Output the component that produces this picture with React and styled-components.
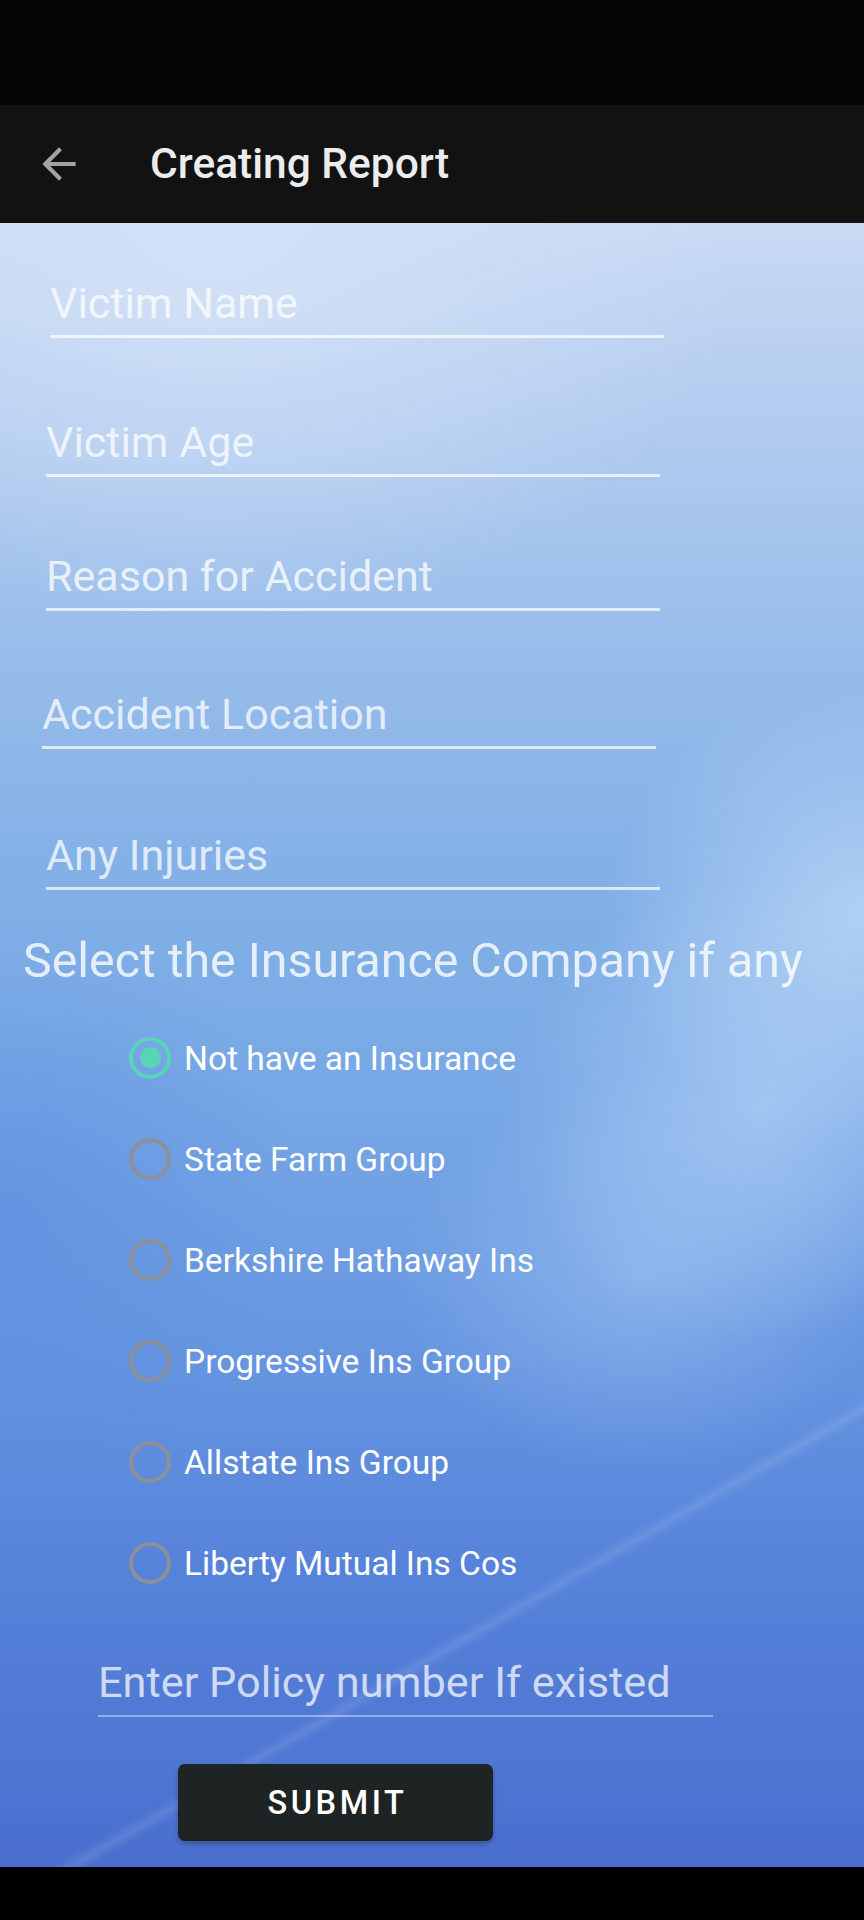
import React from "react";
import styled, { createGlobalStyle } from "styled-components";

const GlobalStyle = createGlobalStyle`
  html, body {
    margin: 0;
    padding: 0;
    background: #000;
  }
  body {
    font-family: Roboto, "Noto Sans", "Liberation Sans", sans-serif;
  }
`;

const fields = [
  { label: "Victim Name", indent: 50, gap: 59 },
  { label: "Victim Age", indent: 46, gap: 83 },
  { label: "Reason for Accident", indent: 46, gap: 78 },
  { label: "Accident Location", indent: 42, gap: 82 },
  { label: "Any Injuries", indent: 46, gap: 85 },
];

const companies = [
  "Not have an Insurance",
  "State Farm Group",
  "Berkshire Hathaway Ins",
  "Progressive Ins Group",
  "Allstate Ins Group",
  "Liberty Mutual Ins Cos",
];

const BackArrow = () => (
  <svg width="50" height="50" viewBox="0 0 24 24">
    <path
      fill="#a3a3a3"
      d="M20 11H7.83l5.59-5.59L12 4l-8 8 8 8 1.41-1.41L7.83 13H20v-2z"
    />
  </svg>
);

const App = () => {
  return (
    <Screen>
      <GlobalStyle />
      <StatusBar />

      <AppBar>
        <BackButton>
          <BackArrow />
        </BackButton>
        <Title>Creating Report</Title>
      </AppBar>

      <Content>
        {fields.map((f) => (
          <Field key={f.label} $indent={f.indent} $gap={f.gap}>
            {f.label}
          </Field>
        ))}

        <Heading>Select the Insurance Company if any</Heading>

        <RadioGroup>
          {companies.map((name, i) => (
            <RadioRow key={name}>
              <Radio $checked={i === 0} />
              <RadioLabel>{name}</RadioLabel>
            </RadioRow>
          ))}
        </RadioGroup>

        <PolicyField>Enter Policy number If existed</PolicyField>

        <SubmitButton>SUBMIT</SubmitButton>
      </Content>

      <NavBar />
    </Screen>
  );
};

export default App;

const Screen = styled.div`
  width: 864px;
  height: 1920px;
  display: flex;
  flex-direction: column;
  overflow: hidden;
`;

const StatusBar = styled.div`
  height: 105px;
  flex-shrink: 0;
  background: #020406;
`;

const AppBar = styled.div`
  height: 118px;
  flex-shrink: 0;
  display: flex;
  align-items: center;
  background: #121212;
`;

const BackButton = styled.div`
  width: 50px;
  height: 50px;
  margin-left: 34px;
  display: flex;

  svg {
    display: block;
  }
`;

const Title = styled.div`
  margin-left: 66px;
  color: #ececec;
  font-size: 42.5px;
  font-weight: 500;
  line-height: 1;
`;

// sky backdrop: soft light band down the right side, faint diagonal streak
const Content = styled.div`
  flex: 1;
  display: flex;
  flex-direction: column;
  align-items: flex-start;
  background:
    linear-gradient(150deg, rgba(255, 255, 255, 0) 78.1%, rgba(255, 255, 255, 0.1) 78.6%, rgba(255, 255, 255, 0) 79.1%),
    radial-gradient(ellipse 30% 14% at 100% 42%, rgba(192, 218, 248, 0.75), rgba(192, 218, 248, 0)),
    radial-gradient(ellipse 30% 14% at 88% 54%, rgba(188, 216, 248, 0.6), rgba(188, 216, 248, 0)),
    radial-gradient(ellipse 28% 12% at 74% 64%, rgba(170, 205, 245, 0.45), rgba(170, 205, 245, 0)),
    radial-gradient(ellipse 60% 22% at 25% 2%, rgba(210, 226, 247, 0.9), rgba(210, 226, 247, 0)),
    radial-gradient(ellipse 35% 18% at 0% 60%, rgba(88, 136, 222, 0.5), rgba(88, 136, 222, 0)),
    linear-gradient(180deg, #c9daf3 0%, #b2cbef 12%, #98bdea 26%, #84b1e7 38%, #7cace6 48%, #72a2e4 58%, #6594e0 70%, #5683da 82%, #4a6fcf 100%);
`;

const Field = styled.div`
  width: 614px;
  margin: ${(p) => p.$gap}px 0 0 ${(p) => p.$indent}px;
  padding-bottom: 10px;
  border-bottom: 3px solid rgba(255, 255, 255, 0.7);
  color: rgba(255, 255, 255, 0.75);
  font-size: 43px;
  line-height: 43px;
`;

const Heading = styled.div`
  margin: 47px 0 0 23px;
  color: rgba(255, 255, 255, 0.8);
  font-size: 48.3px;
  line-height: 48px;
`;

const RadioGroup = styled.div`
  margin: 22px 0 0 129px;
  display: flex;
  flex-direction: column;
`;

const RadioRow = styled.div`
  height: 101px;
  display: flex;
  align-items: center;
  gap: 13px;
`;

const Radio = styled.span`
  width: 42px;
  height: 42px;
  box-sizing: border-box;
  border-radius: 50%;
  border: 4.5px solid ${(p) => (p.$checked ? "#58d5b6" : "#8d9098")};
  display: flex;
  align-items: center;
  justify-content: center;

  &::after {
    content: "";
    width: 21px;
    height: 21px;
    border-radius: 50%;
    background: ${(p) => (p.$checked ? "#58d5b6" : "transparent")};
  }
`;

const RadioLabel = styled.span`
  color: #fff;
  font-size: 33.5px;
  line-height: 1;
  padding-top: 3px;
`;

const PolicyField = styled.div`
  width: 615px;
  margin: 48px 0 0 98px;
  padding-bottom: 11px;
  border-bottom: 2px solid rgba(255, 255, 255, 0.4);
  color: rgba(255, 255, 255, 0.72);
  font-size: 43.3px;
  line-height: 43px;
`;

const SubmitButton = styled.button`
  width: 315px;
  height: 77px;
  margin: 47px 0 0 178px;
  padding: 0 0 0 4px;
  border: none;
  border-radius: 7px;
  background: #1e2424;
  box-shadow: 0 3px 5px rgba(0, 0, 0, 0.25);
  color: #fff;
  font-family: Roboto, "Noto Sans", sans-serif;
  font-size: 32.5px;
  font-weight: 500;
  letter-spacing: 3.6px;
`;

const NavBar = styled.div`
  height: 53px;
  flex-shrink: 0;
  background: #000;
`;
